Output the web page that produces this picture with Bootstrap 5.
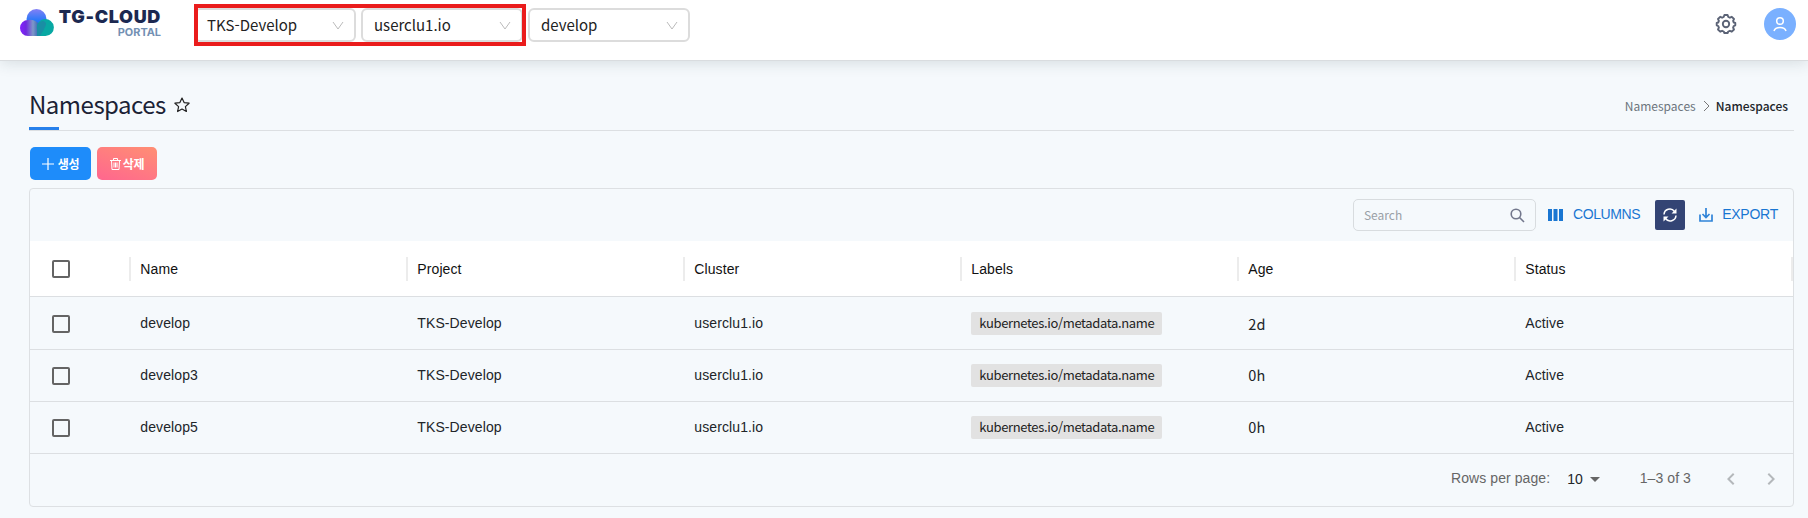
<!DOCTYPE html>
<html lang="ko">
<head>
<meta charset="utf-8">
<meta name="viewport" content="width=device-width, initial-scale=1">
<title>TG-CLOUD PORTAL</title>
<link href="https://cdn.jsdelivr.net/npm/bootstrap@5.3.0/dist/css/bootstrap.min.css" rel="stylesheet">
<style>
body{background:#f5f9fc;font-family:"Noto Sans CJK KR",sans-serif;color:#212529;height:518px;overflow:hidden}
svg{display:block;flex:none}
.topbar{height:61px;background:#fff;border-bottom:1px solid #d9dcdf;box-shadow:0 2px 14px rgba(40,60,65,.15);padding:8px 12px 0 19px}
.brand-text{font-family:Inter,sans-serif;width:104px;margin-left:3px;text-align:right;white-space:nowrap}
.brand-a{font-weight:900;font-size:18px;line-height:18px;color:#1c2951;letter-spacing:.65px}
.brand-b{font-weight:700;font-size:10.900px;line-height:12px;color:#7390b3}
.selects{margin-left:33px;gap:5px;position:relative}
.sel{width:162px;height:34px;border:2px solid #dcdcdc;border-radius:6px;font-size:15px;color:#222;padding:1px 10px 0 11px;background:#fff}
.marker{position:absolute;left:0;top:-4px;width:332px;height:42px;border:4px solid #ea1c1c}
.avatar{width:32px;height:32px;background:#7ab0ff}
.gear{margin-right:26px}
.page-wrap{padding:0 14px 0 29px}
.title-row{height:70px;border-bottom:1px solid #dcdfe2;position:relative}
.title-row::after{content:"";position:absolute;left:0;bottom:0;width:30px;height:3px;background:#2680eb}
.page-title{font-size:24px;line-height:36px;color:#1b2235;font-weight:400;letter-spacing:-.5px}
.crumbs{font-size:12px;line-height:20px;padding:4px 6px 0 0}
.actions{padding:16px 0 0 1px;gap:6px}
.act{height:33px;border-radius:5px;color:#fff;font-weight:700;font-size:12px;white-space:nowrap;letter-spacing:-.3px}
.act-new{width:61px;background:#1e8cfa;gap:4px}
.act-del{width:60px;background:linear-gradient(20deg,#ff668f,#ff8f73);gap:2px}
.panel{margin-top:8px;height:319px;border:1px solid #dde0e3;border-radius:4px}
.tools{height:52px;font-family:"Liberation Sans",Arial,sans-serif;font-size:14px;color:#1976d2;padding-right:15px}
.search{width:183px;height:32px;border:1px solid #d8dcdf;border-radius:5px;padding:0 10px;font-family:"Noto Sans CJK KR",sans-serif;font-size:12px;color:#9aa0a6}
.refresh{width:30px;height:30px;background:#334474;border-radius:2px}
.i-col{margin-left:12px}
.t-col{margin:0 15px 2px 10px;letter-spacing:-.4px}
.i-exp{margin-left:14px}
.t-exp{margin:0 0 2px 9px;letter-spacing:-.25px}
.grid{table-layout:fixed;font-family:"Liberation Sans",Arial,sans-serif;font-size:14px;letter-spacing:.1px;color:#212529;--bs-table-bg:transparent;border-color:#dcdfe2}
.grid>*>tr>*{padding:0 0 0 9.300px;vertical-align:middle;height:52px;border-bottom:1px solid #dcdfe2}
.grid>thead>tr>*{height:55px;padding-top:1px;background:#fff;font-weight:400;color:#111}
.grid>tbody>tr:first-child>*{height:53px;padding-top:2px}
.grid th:first-child,.grid td:first-child{width:101px;padding-left:22px}
.grid>tbody>tr>td:first-child{padding-top:2px}
.headcell{height:24px;border-right:2px solid #ececec;line-height:25px}
.box{width:18px;height:18px;border:2px solid #646464;border-radius:2px}
.chip{display:flex;align-items:center;width:191px;height:23px;background:#e2e2e2;border-radius:2px;padding:0 0 2px 8px;font:13px "Noto Sans CJK KR",sans-serif;letter-spacing:-.35px;color:#222}
.age{font-family:"Noto Sans CJK KR",sans-serif;font-size:14.500px}
.pager{height:51px;font-family:"Liberation Sans",Arial,sans-serif;font-size:14px;color:#666;padding-right:10px}
.p1,.p4{margin-bottom:2px;letter-spacing:.08px}
.p2{margin-left:17px}.p3{margin-left:7px}.p4{margin-left:40px}.p5{margin-left:28px}.p6{margin-left:16px}
</style>
</head>
<body>
<header class="topbar d-flex align-items-start">
  <svg width="35" height="28" viewBox="0 0 35 28">
    <defs>
      <linearGradient id="gt" x1="0" y1="0" x2="0" y2="1"><stop offset="0" stop-color="#8480f5"/><stop offset=".6" stop-color="#2478f8"/><stop offset="1" stop-color="#1668e8"/></linearGradient>
      <linearGradient id="gl"><stop offset="0" stop-color="#8420ff"/><stop offset=".3" stop-color="#7028e0"/><stop offset=".65" stop-color="#7f98c8"/><stop offset="1" stop-color="#2058b0"/></linearGradient>
    </defs>
    <circle cx="17.500" cy="11" r="10" fill="url(#gt)"/>
    <path d="M9 12a8 8 0 0 0 0 16h12V17Q16 11 9 12Z" fill="url(#gl)"/>
    <path d="M18 28V21a8.500 8.500 0 1 1 8.500 7Z" fill="#08a8a3"/><path d="M18 28V20Q18 14 24 12.800Q27.500 14 27 17Q25 22 21 28Z" fill="#1a8ea4"/>
  </svg>
  <div class="brand-text"><div class="brand-a">TG-CLOUD</div><div class="brand-b">PORTAL</div></div>
  <div class="selects d-flex">
    <div class="sel d-flex align-items-center justify-content-between"><span>TKS-Develop</span><svg width="12" height="10" fill="none" stroke="#bbb"><path d="m1 1 5 7 5-7"/></svg></div>
    <div class="sel d-flex align-items-center justify-content-between"><span>userclu1.io</span><svg width="12" height="10" fill="none" stroke="#bbb"><path d="m1 1 5 7 5-7"/></svg></div>
    <div class="sel d-flex align-items-center justify-content-between"><span>develop</span><svg width="12" height="10" fill="none" stroke="#bbb"><path d="m1 1 5 7 5-7"/></svg></div>
    <div class="marker"></div>
  </div>
  <div class="ms-auto d-flex align-items-center">
    <svg class="gear" width="24" height="32" viewBox="0 0 24 32" fill="none" stroke="#5b6376" stroke-width="1.900" stroke-linejoin="round"><circle cx="12" cy="16" r="3.200"/><path d="M10.400 7h3.200l.7 2 1.600.7 1.900-.9 2.200 2.200-.9 1.900.7 1.600 1.500.4v2.400l-1.500.7-.7 1.600.9 1.900-2.200 2.200-1.900-.9-1.600.7-.7 1.500h-3.200l-.7-1.500-1.600-.7-1.900.9L4 21.500l.9-1.900-.7-1.600-1.500-.7v-2.400l1.500-.4.7-1.600L4 11l2.200-2.200 1.900.9 1.600-.7Z"/></svg>
    <div class="avatar rounded-circle d-flex align-items-center justify-content-center"><svg width="14" height="16" fill="none" stroke="#fff" stroke-width="1.500"><circle cx="7" cy="5" r="3.300"/><path d="M1 15Q2 11.500 7 11.500T13 15"/></svg></div>
  </div>
</header>

<main class="page-wrap">
  <div class="title-row d-flex align-items-center">
    <div class="page-title mt-3">Namespaces</div>
    <svg class="mt-3 ms-2" width="16" height="18" viewBox="0 -2 16 18" fill="none" stroke="#222" stroke-width="1.200" stroke-linejoin="round"><path d="m8 1 2.100 4.600 5 .6-3.700 3.400 1 4.900L8 12l-4.400 2.500 1-4.900L.9 6.200l5-.6Z"/></svg>
    <div class="crumbs d-flex align-items-center ms-auto mt-3"><span class="text-secondary">Namespaces</span><svg width="20" height="12" fill="none" stroke="#777"><path d="m8 1 5 5-5 5"/></svg><span class="fw-medium">Namespaces</span></div>
  </div>
  <div class="d-flex actions">
    <div class="act act-new d-flex align-items-center justify-content-center"><svg width="12" height="12" stroke="#fff" stroke-width="1.200"><path d="M6 0v12M0 6h12"/></svg><span>생성</span></div>
    <div class="act act-del d-flex align-items-center justify-content-center"><svg width="11" height="12" fill="none" stroke="#fff"><path d="M0 2.500h11M3.500 2.500V.5h4v2M1.500 2.500l.5 9h7l.5-9M4 4.500v5M5.500 4.500v5M7 4.500v5"/></svg><span>삭제</span></div>
  </div>
  <section class="panel">
    <div class="tools d-flex align-items-center">
      <div class="search ms-auto d-flex align-items-center justify-content-between"><span>Search</span><svg width="15" height="15" fill="none" stroke="#72778c" stroke-width="1.600"><circle cx="6" cy="6" r="4.800"/><path d="m9.500 9.500 4.500 4.500"/></svg></div>
      <svg class="i-col" width="15" height="12" fill="#1976d2"><path d="M0 0h4v12H0zM5.500 0h4v12h-4zM11 0h4v12h-4z"/></svg>
      <span class="t-col">COLUMNS</span>
      <div class="refresh d-flex align-items-center justify-content-center"><svg width="16" height="16" fill="none" stroke="#fff" stroke-width="1.500"><path d="M2 7.500A5.800 5.800 0 0 1 12.500 4.500M14 8.500A5.800 5.800 0 0 1 3.500 11.500"/><path d="M14.500 1.500v5h-5ZM1.500 14.500v-5h5Z" fill="#fff" stroke="none"/></svg></div>
      <svg class="i-exp" width="14" height="14" fill="none" stroke="#2f84d8" stroke-width="1.700"><path d="M1 6.500V13h12V6.500M7 0v9M3.500 6 7 9.500 10.500 6"/></svg>
      <span class="t-exp">EXPORT</span>
    </div>
    <table class="table grid mb-0">
      <thead><tr><th><div class="headcell d-flex align-items-center"><div class="box"></div></div></th><th><div class="headcell">Name</div></th><th><div class="headcell">Project</div></th><th><div class="headcell">Cluster</div></th><th><div class="headcell">Labels</div></th><th><div class="headcell">Age</div></th><th><div class="headcell">Status</div></th></tr></thead>
      <tbody>
        <tr><td><div class="box"></div></td><td>develop</td><td>TKS-Develop</td><td>userclu1.io</td><td><span class="chip">kubernetes.io/metadata.name</span></td><td class="age">2d</td><td>Active</td></tr>
        <tr><td><div class="box"></div></td><td>develop3</td><td>TKS-Develop</td><td>userclu1.io</td><td><span class="chip">kubernetes.io/metadata.name</span></td><td class="age">0h</td><td>Active</td></tr>
        <tr><td><div class="box"></div></td><td>develop5</td><td>TKS-Develop</td><td>userclu1.io</td><td><span class="chip">kubernetes.io/metadata.name</span></td><td class="age">0h</td><td>Active</td></tr>
      </tbody>
    </table>
    <div class="pager d-flex align-items-center justify-content-end">
      <span class="p1">Rows per page:</span><span class="p2 text-dark">10</span>
      <svg class="p3" width="10" height="5" fill="#666"><path d="M0 0h10L5 5Z"/></svg>
      <span class="p4">1–3 of 3</span>
      <svg class="p5" width="24" height="24" fill="#b4b8bb"><path d="M15.410 7.410 14 6l-6 6 6 6 1.410-1.410L10.830 12z"/></svg>
      <svg class="p6" width="24" height="24" fill="#b4b8bb"><path d="M10 6 8.590 7.410 13.170 12l-4.580 4.590L10 18l6-6z"/></svg>
    </div>
  </section>
</main>
<script src="https://cdn.jsdelivr.net/npm/bootstrap@5.3.0/dist/js/bootstrap.bundle.min.js"></script>
</body>
</html>
